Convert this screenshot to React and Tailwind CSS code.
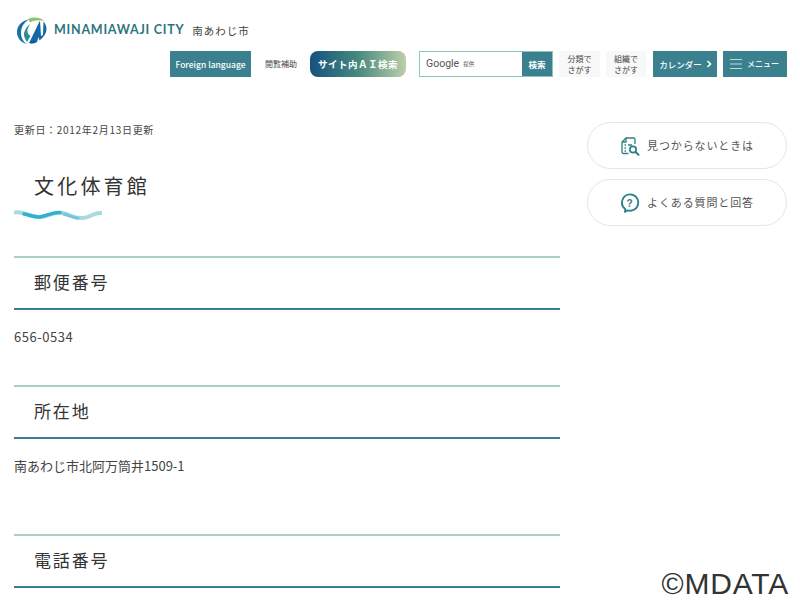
const jp = "font-['Noto_Sans_CJK_JP','Noto_Sans',sans-serif]";

function Logo() {
  return (
    <svg width="32" height="30" viewBox="0 0 32 30" className="shrink-0">
      <path d="M13 3.500C6 4.500 1 9.500 1 16c0 6 4 10.500 9.500 12 -3-2.500-5.500-6-5.500-11C5 10.500 8.500 6 13 3.500Z" fill="#1b6fa8" />
      <path d="M12 3C17 .5 24 1 28.500 5 24 3.500 18 4 14 6.500Z" fill="#8fc36b" />
      <path d="M8 17c1-4 3.500-7 6-9-1.500 3-3 5.500-2.500 8 .5 2 1.500 3 3 4l-3.500 6C9 23 7.500 20 8 17Z" fill="#2a8f9b" />
      <path d="M24 4.500 16 21l-3 6c3 .5 6 .5 8-1l1.500-5 1 3.500C28 21 30.500 17 30.500 13c0-3-1.500-6-3-7.500L27 19l-2 1Z" fill="#1567a3" />
      <path d="M13 27c3-2 5.500-3 8-1.500-2.500 2-5.500 2.500-8 1.500Z" fill="#0f5c96" />
    </svg>
  );
}

function Wave() {
  return (
    <svg width="88" height="12" viewBox="0 0 88 12" className="block">
      <path d="M1 3.500C10 2 15 8 25 8s14-6 23-4 12 6 21 5 11-6 18-5" fill="none" stroke="#a8dbe0" strokeWidth="4" strokeLinecap="round" />
      <path d="M10 5c6 1 10 3.500 16 3S38 3 46 3.500" fill="none" stroke="#2fb2d2" strokeWidth="3.500" strokeLinecap="round" />
      <path d="M50 5c5 1 9 4 14 4" fill="none" stroke="#74c7d8" strokeWidth="3" strokeLinecap="round" />
    </svg>
  );
}

function SearchDocIcon() {
  return (
    <svg width="20" height="20" viewBox="0 0 20 20" fill="none" stroke="#2f7f86" strokeWidth="1.300">
      <path d="M8.500 17.500H3.500A1.500 1.500 0 0 1 2 16V6l4-4h7.500A1.500 1.500 0 0 1 15 3.500V8" />
      <path d="M2 6h4V2" />
      <path d="M4.500 9h1.500M4.500 12h1.500M4.500 15h1.500M8 9h4" />
      <circle cx="13" cy="13.500" r="3.200" strokeWidth="1.700" />
      <path d="m15.500 16 3 2.800" strokeWidth="2" strokeLinecap="round" />
    </svg>
  );
}

function QuestionIcon() {
  return (
    <svg width="20" height="20" viewBox="0 0 20 20" fill="none">
      <path d="M10 1.300a8.200 8.200 0 1 1-2.500 16L5 19l.2-3A8.200 8.200 0 0 1 10 1.300Z" stroke="#2f7f86" strokeWidth="1.800" strokeLinejoin="round" />
      <text x="10" y="13.500" textAnchor="middle" fontSize="10" fontWeight="700" fill="#2f7f86" fontFamily="Liberation Sans">?</text>
    </svg>
  );
}

function Section({ title, text, body }) {
  return (
    <section>
      <h2 className="h-[54px] border-t-2 border-b-2 border-t-[#a9cfc8] border-b-[#3a808c] pl-[20px] text-[17px] leading-[47px] tracking-[0.11em] text-[#333]">
        {title}
      </h2>
      <p className={`pt-[17px] text-[13px] leading-[20px] text-[#444] ${body}`}>{text}</p>
    </section>
  );
}

function SideLink({ icon, label }) {
  return (
    <a className="flex h-[47px] items-center justify-center gap-[7px] rounded-[24px] border border-[#e2e6e6] text-[11px] tracking-[0.08em] text-[#555]">
      {icon}
      <span>{label}</span>
    </a>
  );
}

export default function App() {
  return (
    <div className={`relative h-[600px] w-[800px] overflow-hidden bg-white ${jp}`}>
      <header>
        <div className="flex h-[51px] items-center pl-[16px] pt-[10px]">
          <Logo />
          <span className="ml-[6px] font-['Lato',sans-serif] text-[12.500px] font-bold tracking-[0.06em] text-[#2c7580]">MINAMIAWAJI CITY</span>
          <span className="ml-[8px] text-[10.500px] tracking-[0.09em] text-[#444]">南あわじ市</span>
        </div>
        <div className="flex h-[26px] items-stretch justify-end pr-[13px]">
          <a className="flex w-[81px] items-center justify-center bg-[#3a808f] text-[8.500px] font-medium text-white">Foreign language</a>
          <a className="ml-[14px] flex items-center text-[8px] text-[#444]">閲覧補助</a>
          <a className="ml-[13px] flex w-[96px] items-center justify-center rounded-[8px] bg-gradient-to-r from-[#17517d] via-[#47897f] to-[#bccfa9] text-[9.500px] font-bold tracking-[0.05em] text-white">サイト内ＡＩ検索</a>
          <div className="ml-[13px] flex w-[134px] border border-[#8fc4bb]">
            <div className="flex flex-1 items-center gap-[4px] pl-[6px]">
              <span className="font-['Roboto',sans-serif] text-[10.500px] text-[#555]">Google</span>
              <span className="text-[5.500px] text-[#555]">提供</span>
            </div>
            <button className="w-[30px] bg-[#3a808f] text-[8.500px] font-bold text-white">検索</button>
          </div>
          <a className="ml-[6px] flex w-[41px] items-center justify-center bg-[#f8f8f8] text-center text-[8px] leading-[11.500px] text-[#444]">分類で<br />さがす</a>
          <a className="ml-[6px] flex w-[40px] items-center justify-center bg-[#f8f8f8] text-center text-[8px] leading-[11.500px] text-[#444]">組織で<br />さがす</a>
          <a className="ml-[7px] flex w-[64px] items-center justify-center gap-[4px] bg-[#3a808f] pl-[1px] text-[8.500px] font-medium text-white">
            カレンダー
            <svg width="6" height="8" viewBox="0 0 6 8" fill="none" stroke="#fff" strokeWidth="1.600"><path d="m1.500 1 3 3-3 3" /></svg>
          </a>
          <a className="ml-[6px] flex w-[64px] items-center gap-[5px] bg-[#3a808f] pl-[7px] text-[8px] font-medium text-white">
            <svg width="12" height="12" viewBox="0 0 12 12" stroke="#cfe3e5" strokeWidth="0.900"><path d="M0 1.500h12M0 6h12M0 10.500h12" /></svg>
            メニュー
          </a>
        </div>
      </header>

      <div className="flex gap-[27px] pl-[14px] pr-[13px] pt-[45px]">
        <main className="w-[546px] shrink-0">
          <p className="text-[10px] leading-[16px] tracking-[0.07em] text-[#444]">更新日：2012年2月13日更新</p>
          <h1 className="pl-[20px] pt-[33px] text-[20px] leading-[30px] tracking-[0.16em] text-[#333]">文化体育館</h1>
          <div className="pt-[8px]"><Wave /></div>
          <div className="pt-[35px]">
            <Section title="郵便番号" text="656-0534" body="h-[75px] tracking-[0.04em]" />
            <Section title="所在地" text="南あわじ市北阿万筒井1509-1" body="h-[95px]" />
            <Section title="電話番号" text="" body="h-[40px]" />
          </div>
        </main>
        <aside className="flex w-[200px] flex-col gap-[10px]">
          <SideLink icon={<SearchDocIcon />} label="見つからないときは" />
          <SideLink icon={<QuestionIcon />} label="よくある質問と回答" />
        </aside>
      </div>

      <span className="absolute right-[11px] bottom-[1px] font-['Liberation_Sans',sans-serif] text-[30px] leading-[30px] tracking-[0.8px] text-[#333]">©MDATA</span>
    </div>
  );
}
